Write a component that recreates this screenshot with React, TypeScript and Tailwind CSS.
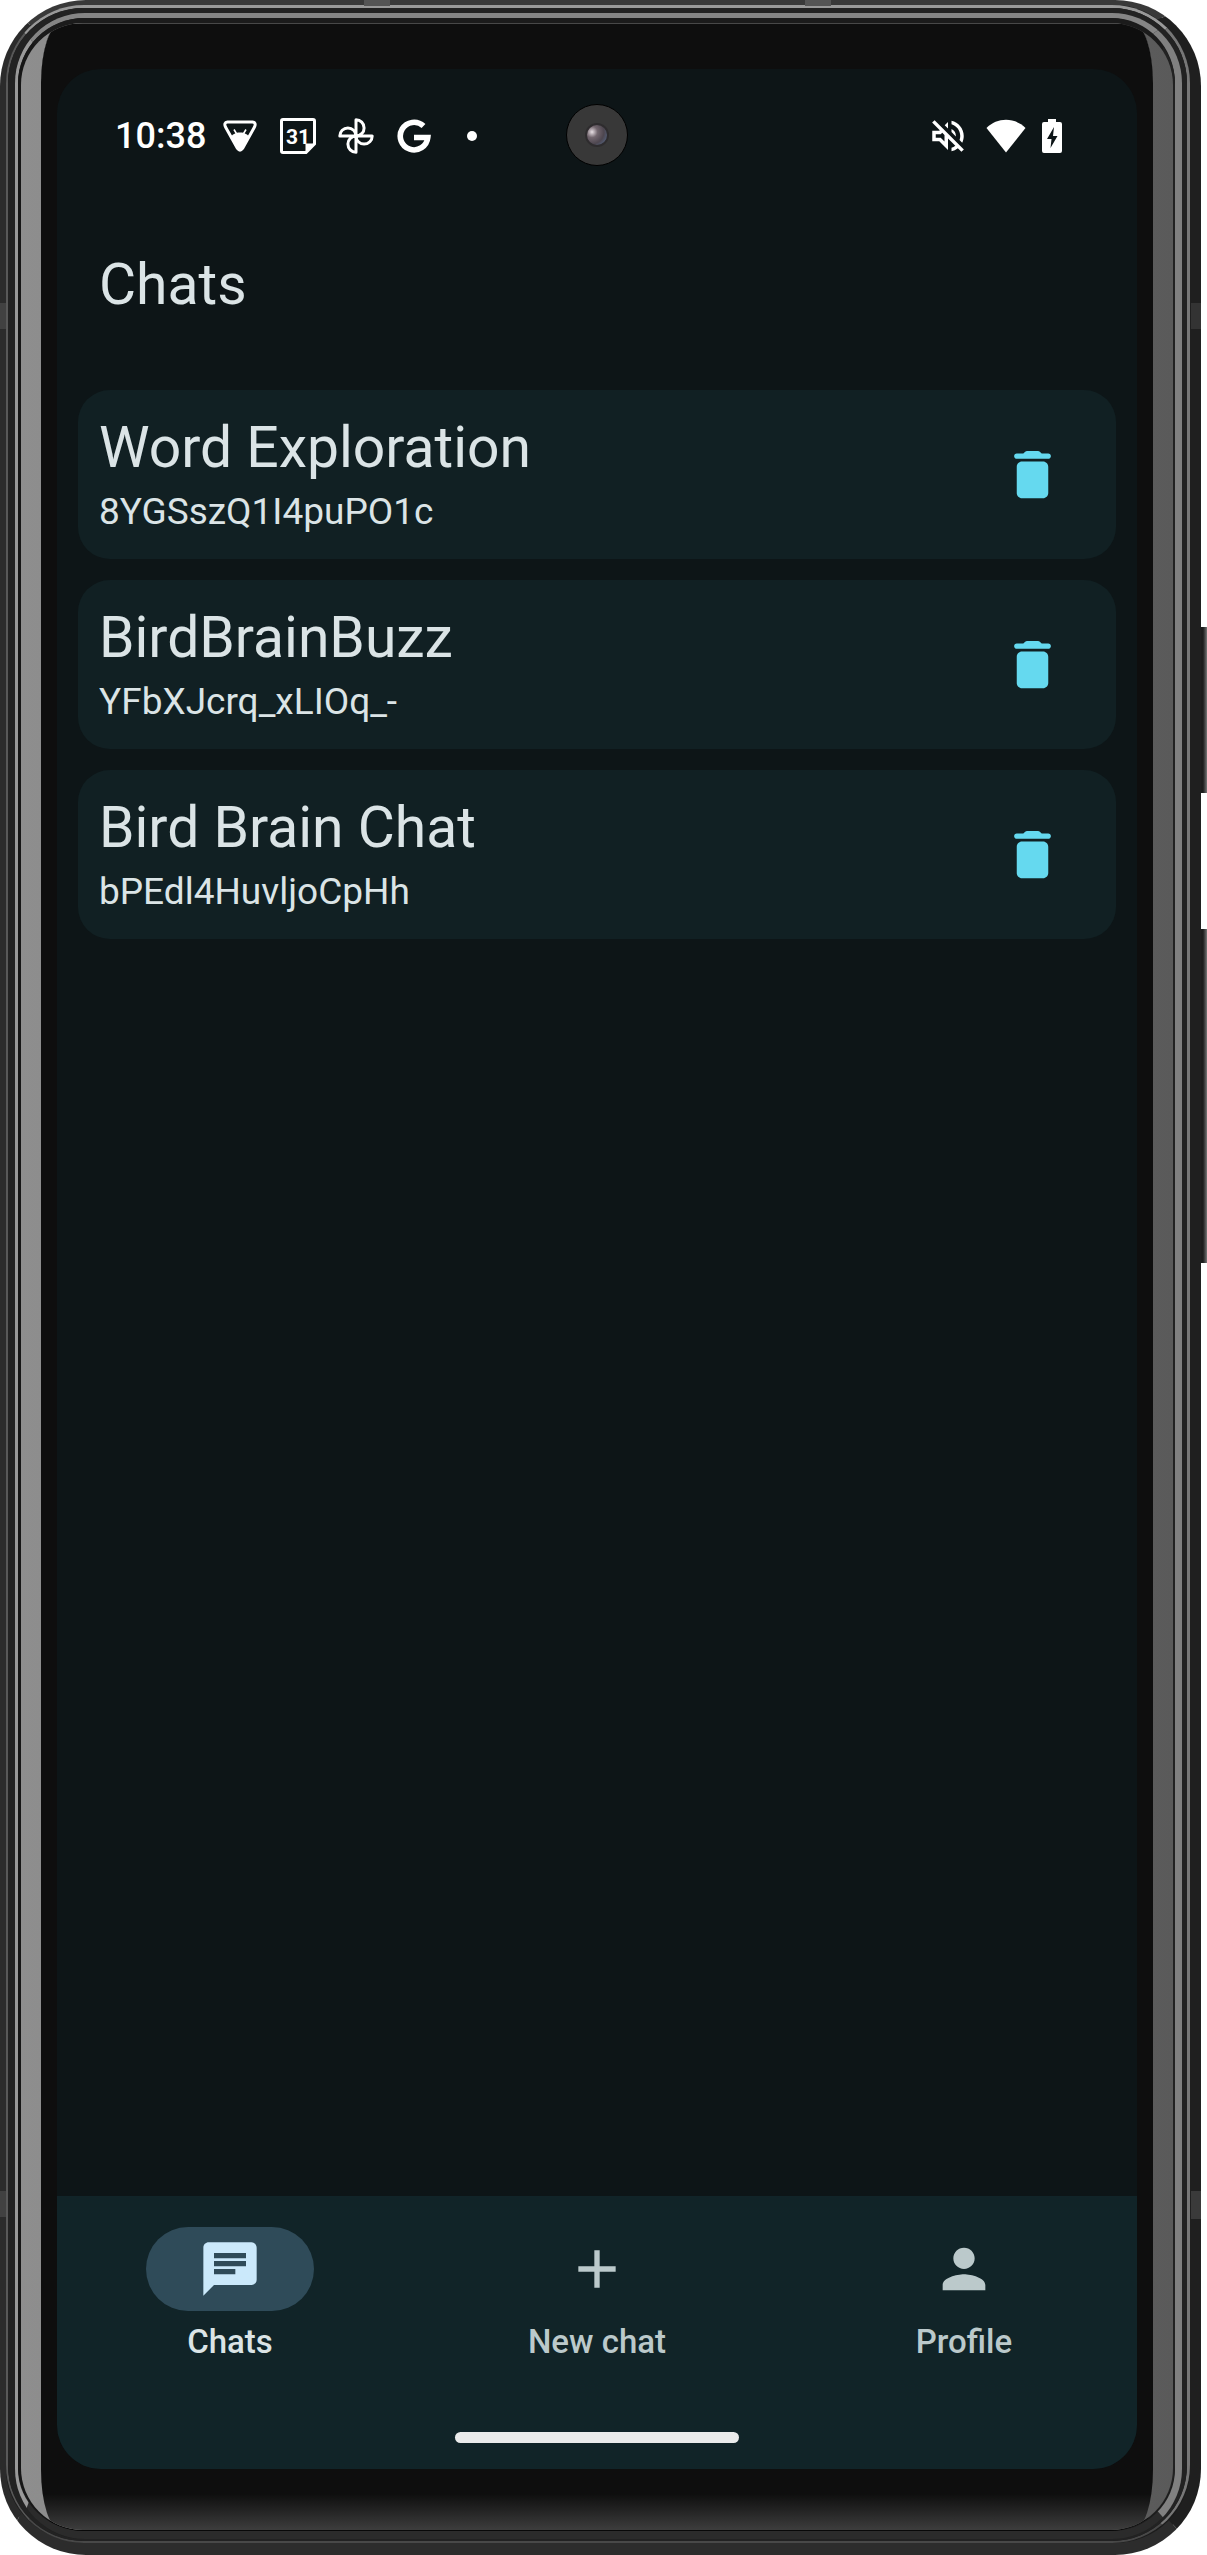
import type { ReactNode } from "react";
import { MdAdd, MdChat, MdOutlineVolumeOff, MdPerson } from "react-icons/md";

const chats = [
  { title: "Word Exploration", id: "8YGSszQ1I4puPO1c" },
  { title: "BirdBrainBuzz", id: "YFbXJcrq_xLIOq_-" },
  { title: "Bird Brain Chat", id: "bPEdl4HuvljoCpHh" },
];

const tabs = [
  { label: "Chats", icon: MdChat, active: true },
  { label: "New chat", icon: MdAdd, active: false },
  { label: "Profile", icon: MdPerson, active: false },
];

function TrashIcon() {
  return (
    <svg viewBox="0 0 24 24" className="size-[63px]" fill="currentColor" aria-hidden="true">
      <path d="M6 19c0 1.100.9 2 2 2h8c1.100 0 2-.9 2-2V9c0-1.100-.9-2-2-2H8c-1.100 0-2 .9-2 2v10zM18 4h-2.500l-.71-.71c-.18-.18-.44-.29-.7-.29H9.910c-.26 0-.52.11-.7.29L8.500 4H6c-.55 0-1 .45-1 1s.45 1 1 1h12c.55 0 1-.45 1-1s-.45-1-1-1z" />
    </svg>
  );
}

function FaceIcon() {
  return (
    <svg viewBox="0 0 36 36" className="size-9" fill="none" stroke="#fff" strokeLinejoin="round" aria-hidden="true">
      <path d="M5.500 4H30.500Q34.500 4.500 32.500 9L20.500 30.500Q18 34 15.500 30.500L3.500 9Q1.500 4.500 5.500 4Z" strokeWidth="3" />
      <path d="M8.500 19.500C10 16.500 13.500 14.500 18 14.500s8 2 9.500 5L20.500 31q-2.500 3-5 0Z" fill="#fff" stroke="none" />
      <path d="M12 11.500l3 5M24 11.500l-3 5" strokeWidth="1.600" />
    </svg>
  );
}

function CalendarIcon() {
  return (
    <svg viewBox="0 0 36 36" className="size-9" aria-hidden="true">
      <path d="M3 1.500H33Q34.500 1.500 34.500 3V26L26 34.500H3Q1.500 34.500 1.500 33V3Q1.500 1.500 3 1.500Z" fill="none" stroke="#fff" strokeWidth="3" />
      <path d="M34.500 25.500L25.500 34.500V25.500Z" fill="#fff" />
      <text x="18" y="25.500" textAnchor="middle" fontSize="21" fontWeight="700" fill="#fff">31</text>
    </svg>
  );
}

function PinwheelIcon() {
  return (
    <svg viewBox="0 0 36 36" className="size-9" fill="none" stroke="#fff" strokeWidth="3" strokeLinejoin="round" aria-hidden="true">
      <path d="M18 1.800A8.100 8.100 0 0 1 18 18Z" />
      <path d="M34.200 18A8.100 8.100 0 0 1 18 18Z" />
      <path d="M18 34.200A8.100 8.100 0 0 1 18 18Z" />
      <path d="M1.800 18A8.100 8.100 0 0 1 18 18Z" />
    </svg>
  );
}

function GoogleIcon() {
  return (
    <svg viewBox="0 0 36 36" className="size-9" fill="none" stroke="#fff" strokeWidth="5.600" aria-hidden="true">
      <path d="M27.500 8A13.800 13.800 0 1 0 31.800 19.500H18" />
    </svg>
  );
}

function WifiIcon() {
  return (
    <svg viewBox="0 0 40 34" className="h-[34px] w-10" fill="#fff" aria-hidden="true">
      <path d="M.5 9C11-2 29-2 39.500 9L20 33.500Z" />
    </svg>
  );
}

function BatteryIcon() {
  return (
    <svg viewBox="0 0 20 34" className="h-[34px] w-5" aria-hidden="true">
      <path d="M6 0h8v3h4q2 0 2 2v27q0 2-2 2H2q-2 0-2-2V5q0-2 2-2h4Z" fill="#fff" />
      <path d="M12 8L5 20h4.500L8.500 29 15.500 17H11Z" fill="#0d1517" />
    </svg>
  );
}

function StatusBar() {
  return (
    <div className="flex h-[132px] items-center pt-0.5 pr-[75px] pl-[58px] text-white">
      <time className="text-4xl leading-none font-medium">10:38</time>
      <div className="ml-4 flex items-center gap-[22px]">
        <FaceIcon />
        <CalendarIcon />
        <PinwheelIcon />
        <GoogleIcon />
        <span className="mx-[13px] size-2.5 rounded-full bg-white" />
      </div>
      <div className="ml-auto flex items-center">
        <MdOutlineVolumeOff className="mr-[17px] size-[42px]" aria-hidden="true" />
        <WifiIcon />
        <span className="w-4" />
        <BatteryIcon />
      </div>
    </div>
  );
}

function Screen() {
  return (
    <div className="relative flex flex-1 flex-col overflow-hidden rounded-[44px] bg-[#0d1517]">
      <div className="absolute top-[35px] left-1/2 flex size-[62px] -translate-x-1/2 items-center justify-center rounded-full border border-black bg-[#383838]">
        <span className="size-6 rounded-full border-2 border-[#2e2c2e] bg-[radial-gradient(circle_at_25%_35%,#e8dfe4_0,#72666e_28%,#4d464f_60%,#53617c_85%,#302e32_100%)]" />
      </div>
      <StatusBar />
      <header className="flex h-[168px] items-center px-[42px]">
        <h1 className="text-[57px] leading-[74px]">Chats</h1>
      </header>
      <main className="flex-1 p-[21px]">
        <ul className="flex flex-col gap-[21px]">
          {chats.map((chat) => (
            <li key={chat.id} className="flex items-center rounded-[32px] bg-[#112023] p-[21px]">
              <div className="min-w-0 flex-1">
                <h2 className="truncate text-[57px] leading-[74px]">{chat.title}</h2>
                <p className="truncate text-[37px] leading-[53px]">{chat.id}</p>
              </div>
              <button
                type="button"
                aria-label={`Delete ${chat.title}`}
                className="flex size-[126px] items-center justify-center text-[#65d9ef]"
              >
                <TrashIcon />
              </button>
            </li>
          ))}
        </ul>
      </main>
      <footer className="flex flex-col items-center bg-[#112428] pb-[26px]">
        <nav className="flex w-full gap-[21px] pt-[31px] pb-[69px]">
          {tabs.map(({ label, icon: Icon, active }) => (
            <button
              key={label}
              type="button"
              aria-current={active ? "page" : undefined}
              className={`flex flex-1 flex-col items-center gap-2.5 ${active ? "text-[#dbe4e6]" : "text-[#bbc9cb]"}`}
            >
              <span
                className={`flex h-[84px] w-[168px] items-center justify-center rounded-full ${active ? "bg-[#2f4b59] text-[#cbe9fb]" : ""}`}
              >
                <Icon className="size-16" aria-hidden="true" />
              </span>
              <span className="text-[33px] leading-[42px] font-medium">{label}</span>
            </button>
          ))}
        </nav>
        <span className="h-[11px] w-[284px] rounded-full bg-[#ebecec]" />
      </footer>
    </div>
  );
}

function Ring({ className, children }: { className: string; children: ReactNode }) {
  return <div className={`flex flex-1 flex-col border-solid ${className}`}>{children}</div>;
}

export default function App() {
  return (
    <div className="relative flex min-h-screen w-full flex-col bg-white pr-1.5 font-[Roboto,sans-serif] text-[#dbe4e6]">
      <span className="absolute top-[627px] right-0 h-[166px] w-2.5 bg-linear-to-r from-[#1c1c1c] from-60% to-[#777]" />
      <span className="absolute top-[929px] right-0 h-[334px] w-2.5 bg-linear-to-r from-[#1c1c1c] from-60% to-[#777]" />
      <Ring className="relative rounded-[86px] border-t-[5px] border-r-[11px] border-b-[12px] border-l-[6px] border-t-[#393939] border-r-[#1f1f1f] border-b-[#2c2c2c] border-l-[#2b2b2b] bg-[#1c1c1c]">
        <Ring className="rounded-[78px] border-t-3 border-r-3 border-b-2 border-l-2 border-t-[#999] border-r-[#777] border-b-[#484848] border-l-[#585858]">
          <Ring className="rounded-[75px] border-t-[5px] border-r-[5px] border-b-2 border-l-[7px] border-[#222]">
            <Ring className="rounded-[70px] border-t-[5px] border-r-[7px] border-b-[8px] border-l-[3px] border-t-[#858585] border-r-[#808080] border-b-[#2b2b2b] border-l-[#999]">
              <Ring className="rounded-[66px] border-t-[5px] border-r-2 border-b-1 border-l-3 border-t-[#1b1b1b] border-r-[#222] border-b-[#080808] border-l-[#161616]">
                <div className="flex flex-1 flex-col overflow-hidden rounded-[62px] bg-linear-to-r from-[#8e8e8e] to-[#5a5a5a] px-5">
                  <div className="flex flex-1 flex-col rounded-[20px/60px] border-t border-[#484848] bg-[linear-gradient(to_top,#3d3d3d,#0e0e0e_36px)] px-4 pt-[45px] pb-[61px]">
                    <Screen />
                  </div>
                </div>
              </Ring>
            </Ring>
          </Ring>
        </Ring>
      </Ring>
      <span className="absolute top-[303px] left-0 h-[26px] w-1.5 bg-[#414141]" />
      <span className="absolute top-[303px] right-1.5 h-[26px] w-2.5 bg-[#333]" />
      <span className="absolute bottom-[338px] left-0 h-[26px] w-1.5 bg-[#414141]" />
      <span className="absolute right-1.5 bottom-[336px] h-[28px] w-2.5 bg-[#3a3a3a]" />
      <span className="absolute top-0 left-[364px] h-1.5 w-[26px] bg-[#555]" />
      <span className="absolute top-0 right-[376px] h-1.5 w-[26px] bg-[#555]" />
    </div>
  );
}
